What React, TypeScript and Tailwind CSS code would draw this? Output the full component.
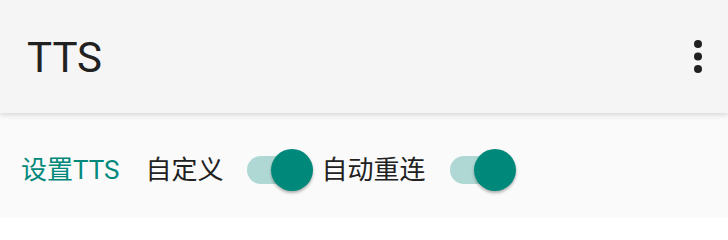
import React from "react";

const font = { fontFamily: "Roboto, 'Noto Sans CJK SC', sans-serif" };

function Switch() {
  return (
    <div className="relative w-[66px] h-[42px] shrink-0">
      <div className="absolute left-0 top-[7px] h-[28px] w-[60px] rounded-full bg-[#afd8d4]" />
      <div className="absolute right-0 top-0 h-[42px] w-[42px] rounded-full bg-[#00897b] shadow-[0_2px_3px_rgba(0,0,0,0.3)]" />
    </div>
  );
}

function MoreIcon() {
  return (
    <svg width="8" height="34" viewBox="0 0 8 34" className="text-[#212121]">
      <circle cx="4" cy="4" r="4" fill="currentColor" />
      <circle cx="4" cy="16.5" r="4" fill="currentColor" />
      <circle cx="4" cy="29" r="4" fill="currentColor" />
    </svg>
  );
}

export default function App() {
  return (
    <div className="w-[728px] h-[218px] overflow-hidden bg-[#fafafa]" style={font}>
      <header className="relative z-10 flex h-[113px] items-center bg-[#f5f5f5] pl-[27px] pr-[26px] pt-[3px] shadow-[0_2px_5px_rgba(0,0,0,0.14)]">
        <h1 className="text-[42px] leading-none font-normal text-[#212121]">TTS</h1>
        <div className="ml-auto -mt-[3px]">
          <MoreIcon />
        </div>
      </header>

      <div className="flex h-[112px] items-center pl-[21px] pt-[2px] text-[26px]">
        <span className="text-[#00897b]">设置TTS</span>
        <span className="ml-[26px] text-[#212121]">自定义</span>
        <div className="ml-[24px]">
          <Switch />
        </div>
        <span className="ml-[8px] text-[#212121]">自动重连</span>
        <div className="ml-[24px]">
          <Switch />
        </div>
      </div>
    </div>
  );
}
